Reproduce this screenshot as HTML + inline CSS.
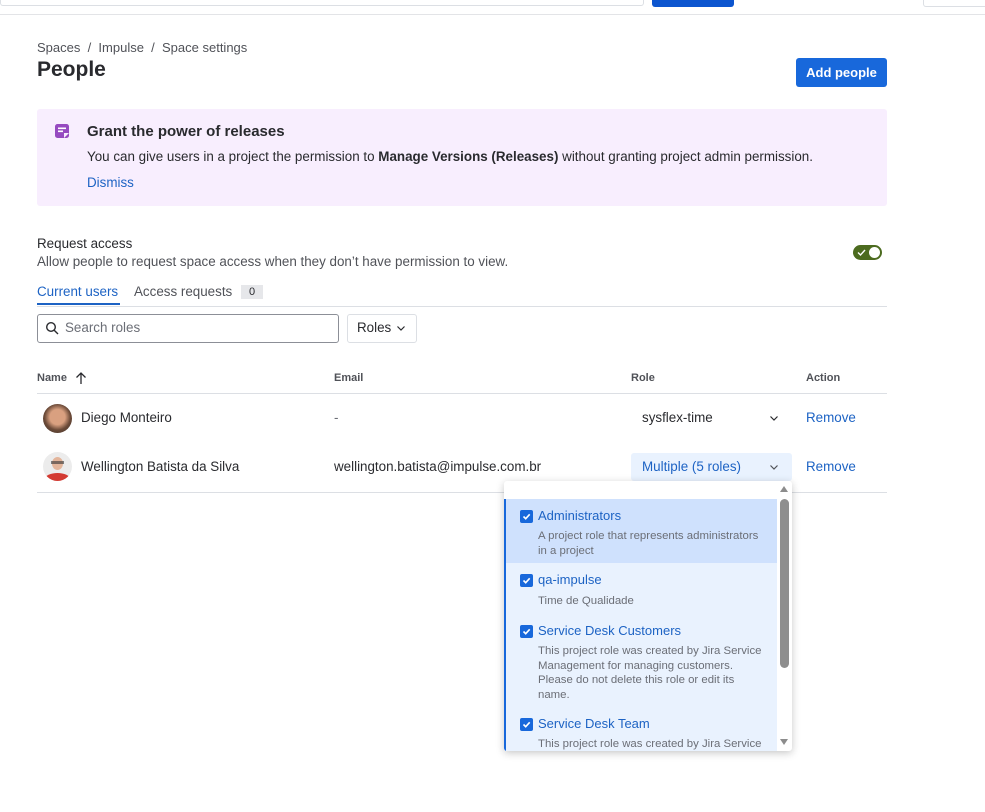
<!DOCTYPE html>
<html><head><meta charset="utf-8"><style>
*{box-sizing:border-box;margin:0;padding:0}
body{width:985px;height:812px;background:#fff;font-family:"Liberation Sans",sans-serif;color:#292a2e;position:relative;overflow:hidden;font-size:14px}
.a{position:absolute;white-space:nowrap}
.link{color:#1d63c4}
.sub{color:#6b6e76;font-size:11.4px;line-height:14.5px;white-space:normal}
.cb{position:absolute;left:14px;width:13px;height:13px;background:#1868db;border-radius:2px}
.cb svg{position:absolute;left:1px;top:1px}
.it{position:absolute;left:0;right:0}
.it .t{position:absolute;left:32px;color:#1d63c4;font-size:13px;white-space:nowrap}
.it .s{position:absolute;left:32px;right:12px}
.m{font-size:13.4px}
</style></head><body>
<div class="a" style="left:0;top:0;width:644px;height:6px;border:1px solid #dcdfe4;border-top:none;border-radius:0 0 3px 3px"></div>
<div class="a" style="left:652px;top:0;width:82px;height:7px;background:#0c55cf;border-radius:0 0 3px 3px"></div>
<div class="a" style="left:923px;top:0;width:70px;height:7px;border:1px solid #dcdfe4;border-top:none;border-radius:0 0 3px 3px"></div>
<div class="a" style="left:0;top:14px;width:985px;height:1px;background:#e3e4e7"></div>

<div class="a" style="left:37px;top:40px;font-size:13px;color:#505258">Spaces &nbsp;/&nbsp; Impulse &nbsp;/&nbsp; Space settings</div>
<div class="a" style="left:37px;top:58px;font-size:21px;font-weight:bold">People</div>
<div class="a" style="left:796px;top:58px;width:91px;height:29px;background:#1868db;border-radius:3px;color:#fff;font-weight:bold;font-size:13px;text-align:center;line-height:29px">Add people</div>

<div class="a" style="left:37px;top:109px;width:850px;height:97px;background:#f8eefe;border-radius:3px"></div>
<svg class="a" style="left:55px;top:124px" width="14" height="14" viewBox="0 0 14 14"><rect x="0" y="0" width="14" height="14" rx="2.5" fill="#964ac0"/><rect x="3" y="3.5" width="8" height="1.6" fill="#fff"/><rect x="3" y="6.5" width="5" height="1.6" fill="#fff"/><path d="M9 14 L14 9 L9 9Z" fill="#f8eefe"/></svg>
<div class="a" style="left:87px;top:123px;font-size:15px;font-weight:bold">Grant the power of releases</div>
<div class="a m" style="left:87px;top:149px">You can give users in a project the permission to <b>Manage Versions (Releases)</b> without granting project admin permission.</div>
<div class="a link m" style="left:87px;top:175px">Dismiss</div>

<div class="a m" style="left:37px;top:236px">Request access</div>
<div class="a m" style="left:37px;top:254px;color:#505258">Allow people to request space access when they don’t have permission to view.</div>
<div class="a" style="left:853px;top:245px;width:29px;height:15px;background:#4c6b1f;border-radius:8px"></div>
<div class="a" style="left:869px;top:247px;width:11px;height:11px;background:#fff;border-radius:50%"></div>
<svg class="a" style="left:857px;top:248px" width="9" height="9" viewBox="0 0 9 9"><path d="M1 4.5 L3.5 7 L8 2" stroke="#fff" stroke-width="1.4" fill="none"/></svg>

<div class="a link m" style="left:37px;top:284px">Current users</div>
<div class="a" style="left:37px;top:303px;width:83px;height:2px;background:#1d63c4"></div>
<div class="a m" style="left:134px;top:284px;color:#505258">Access requests</div>
<div class="a" style="left:241px;top:285px;width:22px;height:14px;background:#e6e7ea;font-size:11px;text-align:center;line-height:14px;color:#292a2e">0</div>
<div class="a" style="left:37px;top:306px;width:850px;height:1px;background:#dcdfe4"></div>

<div class="a" style="left:37px;top:314px;width:302px;height:29px;border:1px solid #8c8f97;border-radius:3px"></div>
<svg class="a" style="left:45px;top:321px" width="14" height="14" viewBox="0 0 14 14"><circle cx="6" cy="6" r="4.3" stroke="#292a2e" stroke-width="1.4" fill="none"/><path d="M9.2 9.2 L13 13" stroke="#292a2e" stroke-width="1.4"/></svg>
<div class="a m" style="left:65px;top:320px;color:#6b6e76">Search roles</div>
<div class="a" style="left:347px;top:314px;width:70px;height:29px;border:1px solid #dcdfe4;border-radius:3px"></div>
<div class="a m" style="left:357px;top:320px">Roles</div>
<svg class="a" style="left:396px;top:324px" width="10" height="8" viewBox="0 0 10 8"><path d="M1.5 2.5 L5 6 L8.5 2.5" stroke="#292a2e" stroke-width="1.2" fill="none"/></svg>

<div class="a" style="left:37px;top:372px;font-size:11px;font-weight:bold;color:#505258">Name</div>
<svg class="a" style="left:75px;top:371px" width="12" height="14" viewBox="0 0 12 14"><path d="M6 13 V2 M1.5 6.5 L6 2 L10.5 6.5" stroke="#292a2e" stroke-width="1.3" fill="none"/></svg>
<div class="a" style="left:334px;top:372px;font-size:11px;font-weight:bold;color:#505258">Email</div>
<div class="a" style="left:631px;top:372px;font-size:11px;font-weight:bold;color:#505258">Role</div>
<div class="a" style="left:806px;top:372px;font-size:11px;font-weight:bold;color:#505258">Action</div>
<div class="a" style="left:37px;top:393px;width:850px;height:1px;background:#dcdfe4"></div>

<div class="a" style="left:43px;top:404px;width:29px;height:29px;border-radius:50%;background:radial-gradient(circle at 50% 45%,#d9a080 0 35%,#6b4a38 60%,#3a302a)"></div>
<div class="a m" style="left:81px;top:410px">Diego Monteiro</div>
<div class="a m" style="left:334px;top:410px;color:#6b6e76">-</div>
<div class="a m" style="left:642px;top:410px">sysflex-time</div>
<svg class="a" style="left:769px;top:414px" width="10" height="8" viewBox="0 0 10 8"><path d="M1.5 2.5 L5 6 L8.5 2.5" stroke="#292a2e" stroke-width="1.2" fill="none"/></svg>
<div class="a link m" style="left:806px;top:410px">Remove</div>

<div class="a" style="left:43px;top:452px;width:29px;height:29px;border-radius:50%;background:#ececec;overflow:hidden"><div style="position:absolute;left:9px;top:5px;width:11px;height:13px;border-radius:50%;background:#e3b59b"></div><div style="position:absolute;left:8px;top:9px;width:13px;height:3px;background:#333;opacity:.6"></div><div style="position:absolute;left:2px;right:2px;bottom:-4px;height:12px;border-radius:50%;background:#d33a32"></div></div>
<div class="a m" style="left:81px;top:459px">Wellington Batista da Silva</div>
<div class="a m" style="left:334px;top:459px">wellington.batista@impulse.com.br</div>
<div class="a" style="left:631px;top:453px;width:161px;height:28px;background:#e9f2fe;border-radius:3px"></div>
<div class="a link m" style="left:642px;top:459px">Multiple (5 roles)</div>
<svg class="a" style="left:769px;top:463px" width="10" height="8" viewBox="0 0 10 8"><path d="M1.5 2.5 L5 6 L8.5 2.5" stroke="#505258" stroke-width="1.2" fill="none"/></svg>
<div class="a link m" style="left:806px;top:459px">Remove</div>
<div class="a" style="left:37px;top:492px;width:850px;height:1px;background:#dcdfe4"></div>

<div class="a" style="left:504px;top:481px;width:288px;height:270px;background:#fff;box-shadow:0 2px 8px rgba(30,31,33,.25);border-radius:3px;overflow:hidden">
 <div style="position:absolute;left:0;top:18px;width:273px;height:252px;background:#e9f2fe;border-left:2px solid #1868db">
  <div class="it" style="top:0;height:64px;background:#cfe1fd">
   <div class="cb" style="top:11px"><svg width="11" height="11" viewBox="0 0 11 11"><path d="M2.5 5.5 L4.7 7.7 L8.7 3.3" stroke="#fff" stroke-width="1.6" fill="none"/></svg></div>
   <div class="t" style="top:9px">Administrators</div>
   <div class="s sub" style="top:30px">A project role that represents administrators in a project</div>
  </div>
  <div class="it" style="top:64px;height:50px">
   <div class="cb" style="top:11px"><svg width="11" height="11" viewBox="0 0 11 11"><path d="M2.5 5.5 L4.7 7.7 L8.7 3.3" stroke="#fff" stroke-width="1.6" fill="none"/></svg></div>
   <div class="t" style="top:9px">qa-impulse</div>
   <div class="s sub" style="top:31px">Time de Qualidade</div>
  </div>
  <div class="it" style="top:114px;height:94px">
   <div class="cb" style="top:12px"><svg width="11" height="11" viewBox="0 0 11 11"><path d="M2.5 5.5 L4.7 7.7 L8.7 3.3" stroke="#fff" stroke-width="1.6" fill="none"/></svg></div>
   <div class="t" style="top:10px">Service Desk Customers</div>
   <div class="s sub" style="top:31px">This project role was created by Jira Service<br>Management for managing customers.<br>Please do not delete this role or edit its<br>name.</div>
  </div>
  <div class="it" style="top:207px;height:50px">
   <div class="cb" style="top:12px"><svg width="11" height="11" viewBox="0 0 11 11"><path d="M2.5 5.5 L4.7 7.7 L8.7 3.3" stroke="#fff" stroke-width="1.6" fill="none"/></svg></div>
   <div class="t" style="top:10px">Service Desk Team</div>
   <div class="s sub" style="top:31px">This project role was created by Jira Service</div>
  </div>
 </div>
 <svg style="position:absolute;left:276px;top:5px" width="8" height="6" viewBox="0 0 8 6"><path d="M0 6 L4 0 L8 6Z" fill="#8c8c8c"/></svg>
 <div style="position:absolute;left:276px;top:18px;width:9px;height:169px;background:#8e8e8e;border-radius:5px"></div>
 <svg style="position:absolute;left:276px;top:258px" width="8" height="6" viewBox="0 0 8 6"><path d="M0 0 L8 0 L4 6Z" fill="#8c8c8c"/></svg>
</div>
</body></html>
